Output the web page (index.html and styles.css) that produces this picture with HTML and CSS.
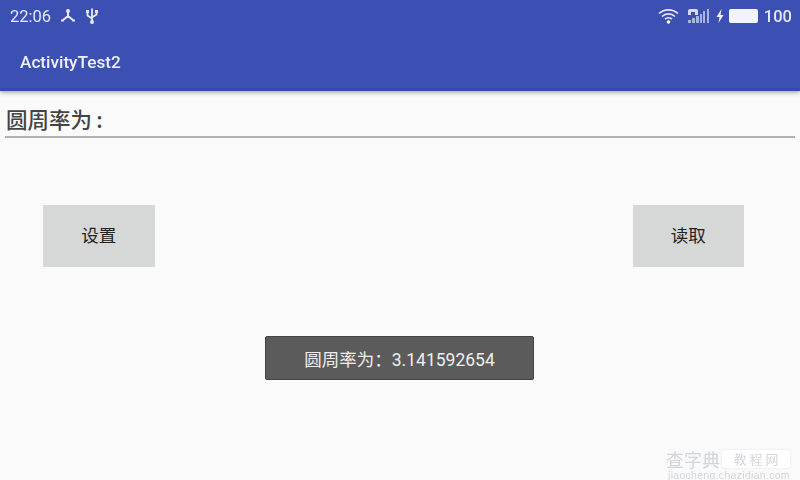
FILE: index.html
```html
<!DOCTYPE html>
<html lang="zh">
<head>
<meta charset="utf-8">
<title>ActivityTest2</title>
<link rel="stylesheet" href="styles.css">
</head>
<body>
<div class="app">
  <header class="appbar">
    <div class="status">
      <div class="status-group">
        <span class="clock">22:06</span>
        <svg class="ico" width="18" height="16" viewBox="0 0 18 16"><path d="M9 2.5v5.5M9 8l-5.5 4.5M9 8l5.500 4.500M2 12.500h3M13 12.500h3" fill="none" stroke="#e6e9f6" stroke-width="2"/><circle cx="9" cy="3" r="2" fill="#e6e9f6"/></svg>
        <svg class="ico" width="14" height="18" viewBox="0 0 14 18"><path d="M7 1.500v15M2.500 5v3.500l4.500 3M11.500 5v2.500l-4.500 3" fill="none" stroke="#e6e9f6" stroke-width="1.8"/><rect x="1" y="3" width="3" height="3" fill="#e6e9f6"/><rect x="10" y="3" width="3" height="3" fill="#e6e9f6"/><circle cx="7" cy="15" r="2" fill="#e6e9f6"/></svg>
      </div>
      <div class="status-group right">
        <svg class="ico wifi" width="21" height="16" viewBox="0 0 21 16"><path d="M1 5.500a14 14 0 0 1 19 0M4 8.500a9.500 9.500 0 0 1 13 0M7 11.200a5 5 0 0 1 7 0" fill="none" stroke="#e6e9f6" stroke-width="1.7"/><circle cx="10.500" cy="14" r="1.800" fill="#fff"/></svg>
        <svg class="ico signal" width="23" height="16" viewBox="0 0 23 16"><path d="M1 15v-3h3v3zM5 15v-5h3v5zM9 15V8h3v7zM13 15V6h2v9zM16 15V3h2v12zM20 15V1h2v14z" fill="#aab3de"/><path d="M1 3c0-1.500 1-2 3-2h4c2 0 3 .5 3 2v4H8V4H4v3H1z" fill="#d7dcf0"/></svg>
        <svg class="ico bolt" width="10" height="14" viewBox="0 0 9 14"><path d="M6 0L1 8h3l-1 6 5-8H5z" fill="#eef0f9"/></svg>
        <span class="battery"></span>
        <span class="level">100</span>
      </div>
    </div>
    <div class="toolbar">ActivityTest2</div>
  </header>
  <main class="content">
    <div class="field">圆周率为&#8201;:</div>
    <div class="actions">
      <button class="btn" type="button">设置</button>
      <button class="btn" type="button">读取</button>
    </div>
  </main>
  <div class="toast">圆周率为：3.141592654</div>
  <div class="watermark">
    <div class="mark-top"><span class="mark-name">查字典</span><span class="mark-tag">教 程 网</span></div>
    <div class="mark-url">jiaocheng.chazidian.com</div>
  </div>
</div>
</body>
</html>
```
FILE: styles.css
```css
* { box-sizing: border-box; }
html, body { margin: 0; padding: 0; }
body { width: 800px; height: 480px; overflow: hidden; background: #fafafa; font-family: "Roboto", "Noto Sans CJK SC", sans-serif; }
.app { position: relative; width: 800px; height: 480px; display: flex; flex-direction: column; }
.appbar { height: 91px; background: #3b50b2; color: #eef0f9; border-bottom: 3px solid #324aa9; box-shadow: 0 2px 4px rgba(0,0,0,.3); flex: none; }
.status { height: 33px; padding: 0 8px 1px 10px; display: flex; align-items: center; justify-content: space-between; filter: blur(.6px); }
.status-group { display: flex; align-items: center; gap: 8px; }
.status-group.right { gap: 0; }
.clock, .level { font-size: 16.5px; color: #e6e9f6; }
.level { font-weight: 500; margin-left: 6px; }
.wifi { margin-right: 8px; }
.bolt { margin-left: 5px; margin-right: 4px; }
.battery { width: 29px; height: 14px; background: #f3f5fc; border-radius: 2px; }
.ico { display: block; flex: none; }
.toolbar { padding: 13px 0 0 20px; font-size: 17.2px; line-height: 32px; font-weight: 500; filter: blur(.6px); }
.content { flex: 1; display: flex; flex-direction: column; padding: 0 5px; }
.field { height: 47px; padding: 13px 0 0 1px; font-size: 21.5px; line-height: 30px; font-weight: 500; color: #444; border-bottom: 2px solid #b4b4b4; font-family: "Noto Sans CJK SC", sans-serif; }
.actions { margin-top: 67px; padding: 0 51px 0 38px; display: flex; justify-content: space-between; }
.btn { width: 111.500px; height: 62px; padding: 0 0 3px; border: 0; border-radius: 1px; background: #d6d7d7; color: #222; font-size: 17.500px; font-family: "Noto Sans CJK SC", sans-serif; }
.toast { position: absolute; left: 265px; top: 336px; width: 269px; height: 44px; display: flex; align-items: center; justify-content: center; background: #5b5b5b; border: 1px solid #444; border-radius: 2px; color: #eee; font-size: 17.500px; font-family: "Roboto", "Noto Sans CJK SC", sans-serif; }
.watermark { position: absolute; left: 666px; top: 450px; width: 126px; color: #d2d6db; font-family: "Noto Sans CJK SC", sans-serif; filter: blur(.6px); }
.mark-top { display: flex; align-items: center; gap: 2px; height: 18px; }
.mark-name { font-size: 18px; line-height: 18px; width: 54px; white-space: nowrap; }
.mark-tag { width: 68px; height: 18px; border-radius: 3px; background: #fff; box-shadow: 0 0 2px #ddd; font-size: 13px; line-height: 18px; text-align: center; }
.mark-url { margin: 2px 0 0 2px; font-size: 10.500px; line-height: 10px; letter-spacing: .3px; white-space: nowrap; font-family: "Liberation Sans", sans-serif; }
```
